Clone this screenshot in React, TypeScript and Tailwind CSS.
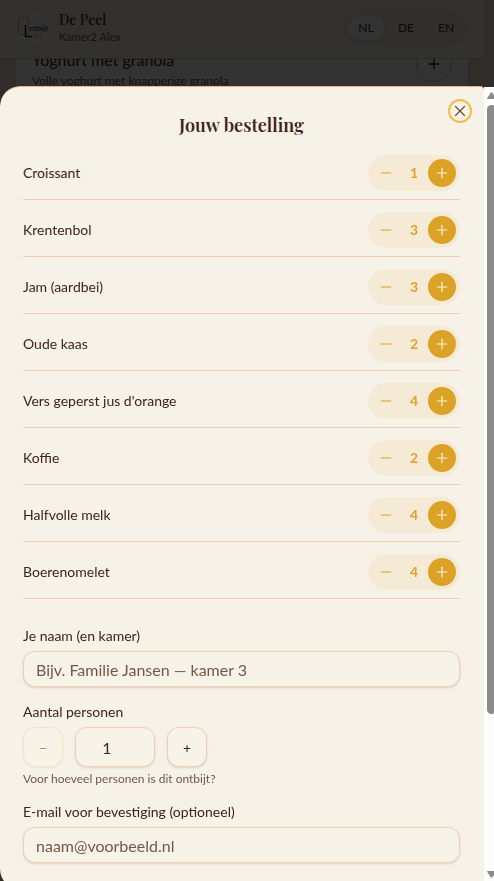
import { useState } from "react";
import { Minus, Plus, X } from "lucide-react";

const initialItems = [
  { name: "Croissant", count: 1 },
  { name: "Krentenbol", count: 3 },
  { name: "Jam (aardbei)", count: 3 },
  { name: "Oude kaas", count: 2 },
  { name: "Vers geperst jus d'orange", count: 4 },
  { name: "Koffie", count: 2 },
  { name: "Halfvolle melk", count: 4 },
  { name: "Boerenomelet", count: 4 },
];

const serif = "font-['Playfair_Display','Liberation_Serif',serif]";
const field =
  "rounded-xl border border-[#f5cdb0] bg-[#f8f3e8] text-base text-[#3d2222] shadow-sm placeholder:text-[#705850] focus:outline-none";

function Logo() {
  return (
    <svg viewBox="0 0 36 36" className="size-9 rounded-full bg-[#fdfbf7]" role="img" aria-label="Ontbijtlijst">
      <rect x="3.5" y="7.500" width="10" height="17" rx="1.500" fill="none" stroke="#d9b44a" strokeWidth="1.200" />
      <path d="M10.500 15v11.500h6.500" fill="none" stroke="#222222" strokeWidth="1.600" />
      <text x="14.500" y="21" fontSize="8" fontFamily="Lato, sans-serif" fill="#222222">ntbijt</text>
      <text x="18" y="27.500" fontSize="7" fontFamily="Lato, sans-serif" fill="#d9a520">ijst</text>
    </svg>
  );
}

function Backdrop() {
  return (
    <div className="pr-[10px]" aria-hidden="true">
      <header className="flex items-center gap-2 border-b border-[#f0c8a8] bg-[#f7f2e7] pt-[10px] pr-4 pb-3 pl-[15px]">
        <Logo />
        <div className="flex-1">
          <p className={`${serif} text-sm leading-[18px] font-medium text-[#4a2c2a]`}>De Peel</p>
          <p className="text-[11px] leading-4 text-[#705850]">Kamer2 Alex</p>
        </div>
        <div className="flex gap-1 rounded-full bg-[#f2ebdd] p-1 text-xs text-[#4a2c2a]">
          <button className="h-6 w-9 rounded-full bg-white shadow-sm">NL</button>
          <button className="h-6 w-9 rounded-full">DE</button>
          <button className="h-6 w-9 rounded-full">EN</button>
        </div>
      </header>
      <main className="h-[180px] overflow-hidden px-[15px]">
        <article className="-mt-[22px] flex h-40 items-start justify-between border border-[#f0c8a8] bg-white px-4 pt-2">
          <div className="pt-1">
            <h3 className="text-base leading-5 text-[#3d2222]">Yoghurt met granola</h3>
            <p className="mt-px text-xs leading-5 text-[#705850]">Volle yoghurt met knapperige granola</p>
          </div>
          <button className="flex size-9 items-center justify-center rounded-full border border-[#f0b48c] text-[#3d2222]">
            <Plus size={16} />
          </button>
        </article>
      </main>
    </div>
  );
}

function Scrollbar() {
  return (
    <div className="mt-px flex w-[10px] shrink-0 flex-col overflow-hidden bg-[#fcfcfc] pt-[5px] pb-[11px] pl-[3px]" aria-hidden="true">
      <svg viewBox="0 0 9 7" className="h-[7px] w-[9px] shrink-0" fill="#8b8b8b">
        <path d="M0 6.500Q0 7 1 7H8Q9 7 9 6.500L5.500 1Q4.500-.5 3.500 1Z" />
      </svg>
      <div className="mt-[6px] w-[9px] flex-[608] rounded-full bg-[#8b8b8b]" />
      <div className="flex-[157]" />
      <svg viewBox="0 0 9 7" className="h-[7px] w-[9px] shrink-0" fill="#8b8b8b">
        <path d="M0 .5Q0 0 1 0H8Q9 0 9 .5L5.500 6Q4.500 7.500 3.500 6Z" />
      </svg>
    </div>
  );
}

export default function App() {
  const [items, setItems] = useState(initialItems);
  const [persons, setPersons] = useState(1);

  const change = (index: number, delta: number) =>
    setItems(items.map((it, i) => (i === index ? { ...it, count: Math.max(0, it.count + delta) } : it)));

  return (
    <div className="relative h-screen overflow-hidden bg-[#e9dfcc] font-['Lato',sans-serif] text-[#3d2222]">
      <Backdrop />
      <div className="fixed inset-0 bg-black/80" />

      <section
        role="dialog"
        aria-labelledby="order-title"
        className="fixed inset-x-0 top-[86px] -bottom-2 flex overflow-hidden rounded-l-[20px]"
      >
        <div className="relative min-w-0 flex-1 rounded-tl-[20px] rounded-tr-sm border-t border-[#f2ab7c] bg-[#f7f2e7] pt-6 pr-6 pl-[23px]">
          <button
            aria-label="Sluiten"
            className="absolute top-3 right-3 flex size-6 items-center justify-center rounded-full border-2 border-[#f0bd4f] bg-[#f9f1e2] text-[#5e4540]"
          >
            <X size={18} strokeWidth={1.5} className="shrink-0" />
          </button>
          <h2 id="order-title" className={`${serif} mb-1 text-center text-lg leading-7 font-semibold`}>
            Jouw bestelling
          </h2>

          <ul>
            {items.map((item, i) => (
              <li key={item.name} className="flex items-center justify-between border-b border-[#f3cdb2] pt-3 pb-2">
                <span className="text-sm">{item.name}</span>
                <div className="flex items-center rounded-full bg-[#f5ead6] p-1 text-[#dfa32a]">
                  <button
                    aria-label={`Minder ${item.name}`}
                    onClick={() => change(i, -1)}
                    className="flex size-7 items-center justify-center text-[#e6b655]"
                  >
                    <Minus size={16} />
                  </button>
                  <span className="w-7 text-center text-sm font-bold">{item.count}</span>
                  <button
                    aria-label={`Meer ${item.name}`}
                    onClick={() => change(i, 1)}
                    className="flex size-7 items-center justify-center rounded-full bg-[#dca226] text-[#fbf3e0]"
                  >
                    <Plus size={16} strokeWidth={1.75} />
                  </button>
                </div>
              </li>
            ))}
          </ul>

          <form className="mt-[27px] flex flex-col gap-[15px]">
            <div>
              <label htmlFor="name" className="mb-[5px] block text-sm leading-5">
                Je naam (en kamer)
              </label>
              <input id="name" placeholder="Bijv. Familie Jansen — kamer 3" className={`${field} block h-9 w-full px-3`} />
            </div>
            <div>
              <label htmlFor="persons" className="mb-[5px] block text-sm leading-5">
                Aantal personen
              </label>
              <div className="flex gap-3">
                <button
                  type="button"
                  aria-label="Minder personen"
                  disabled={persons <= 1}
                  onClick={() => setPersons(persons - 1)}
                  className={`${field} size-10 disabled:opacity-50`}
                >
                  <span className="text-sm">−</span>
                </button>
                <input
                  id="persons"
                  inputMode="numeric"
                  value={persons}
                  onChange={(e) => setPersons(Math.max(1, Number(e.target.value) || 1))}
                  className={`${field} h-10 w-20 pr-7 pl-3 text-center`}
                />
                <button
                  type="button"
                  aria-label="Meer personen"
                  onClick={() => setPersons(persons + 1)}
                  className={`${field} size-10`}
                >
                  <span className="text-sm">+</span>
                </button>
              </div>
              <p className="mt-1 text-xs leading-4 text-[#705850]">Voor hoeveel personen is dit ontbijt?</p>
            </div>
            <div>
              <label htmlFor="email" className="mb-[5px] block text-sm leading-5">
                E-mail voor bevestiging (optioneel)
              </label>
              <input id="email" type="email" placeholder="naam@voorbeeld.nl" className={`${field} block h-9 w-full px-3`} />
            </div>
          </form>
        </div>
        <Scrollbar />
      </section>
    </div>
  );
}
